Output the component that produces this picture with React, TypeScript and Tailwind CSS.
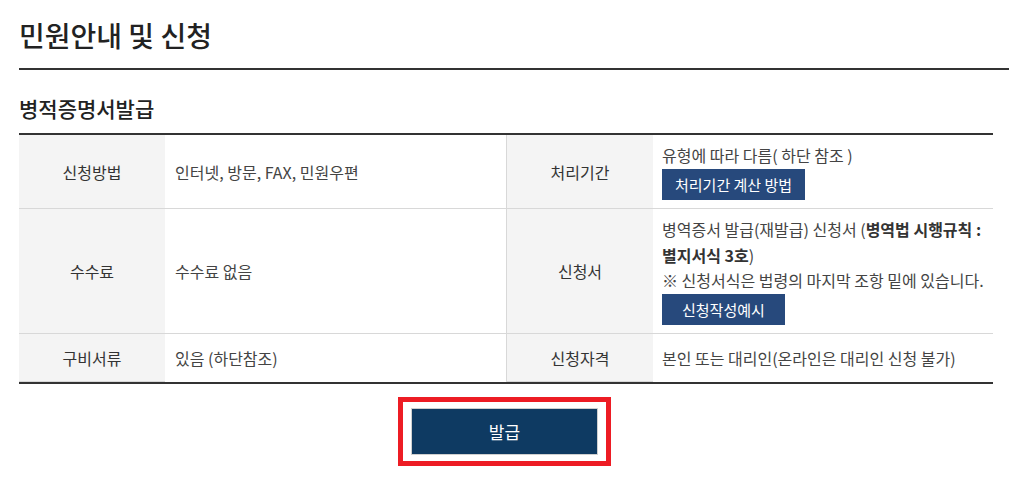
import React from "react";

export default function App() {
  return (
    <div className="w-[1009px] h-[477px] bg-white text-[#333] font-['Noto_Sans_CJK_KR','Noto_Sans',sans-serif] overflow-hidden">
      <div className="pl-[19px]">
        <h1 className="h-[70px] pt-[15px] border-b-2 border-[#333] text-[28px] leading-[40px] font-medium text-[#222]">
          민원안내 및 신청
        </h1>
        <h2 className="mt-[23px] mb-[10px] text-[21px] leading-[30px] font-medium text-[#222]">
          병적증명서발급
        </h2>
        <div className="w-[974px] border-t-2 border-b-2 border-[#333] text-[16px]">
          <div className="grid grid-cols-[146px_342px_146px_340px] h-[74px] border-b border-[#d8d8d8]">
            <div className="bg-[#f4f4f4] flex items-center justify-center">신청방법</div>
            <div className="border-r border-[#d8d8d8] flex items-center pl-[10px] text-[#444]">인터넷, 방문, FAX, 민원우편</div>
            <div className="bg-[#f4f4f4] flex items-center justify-center">처리기간</div>
            <div className="flex flex-col justify-center items-start pl-[9px] leading-[25.5px] text-[#444]">
              <div className="whitespace-nowrap">유형에 따라 다름( 하단 참조 )</div>
              <button className="h-[31px] px-[13px] bg-[#27497c] text-white text-[15px] leading-[31px] whitespace-nowrap">처리기간 계산 방법</button>
            </div>
          </div>
          <div className="grid grid-cols-[146px_342px_146px_340px] h-[125px] border-b border-[#d8d8d8]">
            <div className="bg-[#f4f4f4] flex items-center justify-center">수수료</div>
            <div className="border-r border-[#d8d8d8] flex items-center pl-[10px] text-[#444]">수수료 없음</div>
            <div className="bg-[#f4f4f4] flex items-center justify-center">신청서</div>
            <div className="flex flex-col justify-center items-start pl-[9px] leading-[25.5px] text-[#444]">
              <div className="whitespace-nowrap">병역증서 발급(재발급) 신청서 (<b className="font-semibold text-[#333]">병역법 시행규칙 :</b></div>
              <div className="whitespace-nowrap"><b className="font-semibold text-[#333]">별지서식 3호</b>)</div>
              <div className="whitespace-nowrap">※ 신청서식은 법령의 마지막 조항 밑에 있습니다.</div>
              <button className="h-[31px] px-[20px] bg-[#27497c] text-white text-[15px] leading-[31px] whitespace-nowrap">신청작성예시</button>
            </div>
          </div>
          <div className="grid grid-cols-[146px_342px_146px_340px] h-[48px]">
            <div className="bg-[#f4f4f4] flex items-center justify-center border-b border-[#d8d8d8]">구비서류</div>
            <div className="border-r border-[#d8d8d8] flex items-center pl-[10px] text-[#444]">있음 (하단참조)</div>
            <div className="bg-[#f4f4f4] flex items-center justify-center border-b border-[#d8d8d8]">신청자격</div>
            <div className="flex items-center pl-[9px] text-[#444] whitespace-nowrap">본인 또는 대리인(온라인은 대리인 신청 불가)</div>
          </div>
        </div>
      </div>
      <div className="flex justify-center mt-[13px]">
        <div className="border-[5px] border-[#ed1c24] px-[8px] py-[6px]">
          <button className="w-[187px] h-[47px] border border-[#cfcfcf] bg-[#0e3a62] text-white text-[17px]">발급</button>
        </div>
      </div>
    </div>
  );
}
